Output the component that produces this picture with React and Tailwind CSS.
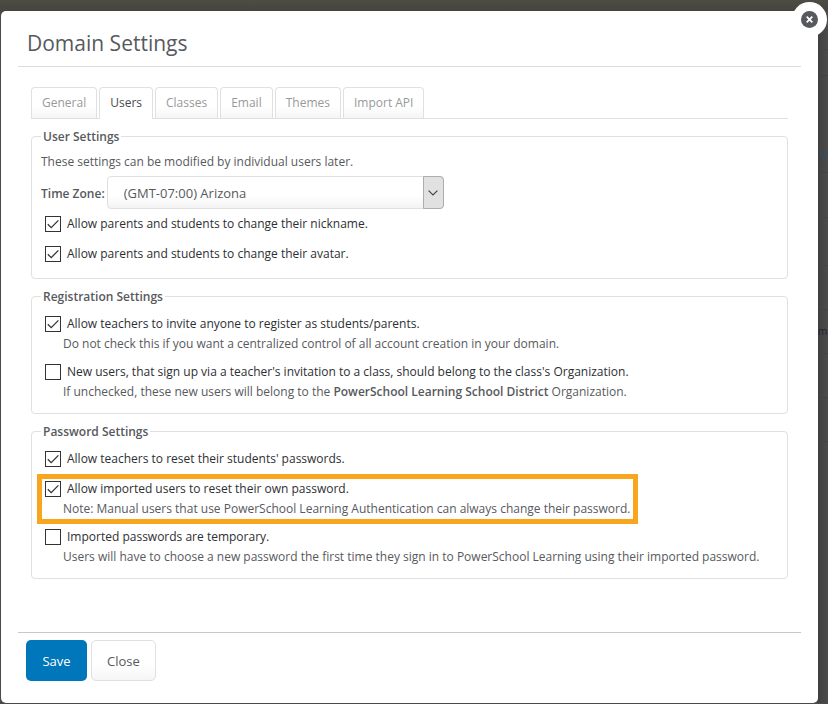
import { useState } from 'react';

const tabs = ['General', 'Users', 'Classes', 'Email', 'Themes', 'Import API'];

const Checkbox = ({ id, label, defaultChecked }) => (
  <div className="flex items-center gap-1.5 pl-1">
    <span className="grid size-4 shrink-0">
      <input
        id={id}
        type="checkbox"
        defaultChecked={defaultChecked}
        className="peer col-start-1 row-start-1 size-4 appearance-none border border-[#333] bg-white"
      />
      <svg
        viewBox="0 0 16 16"
        className="pointer-events-none invisible col-start-1 row-start-1 size-4 peer-checked:visible"
        fill="none"
        stroke="#333"
        strokeWidth="1.3"
        aria-hidden="true"
      >
        <path d="M2.8 8.2 6.2 11.6 13.4 4.4" />
      </svg>
    </span>
    <label htmlFor={id} className="leading-5 text-[#2d2f33]">
      {label}
    </label>
  </div>
);

const Hint = ({ children }) => <p className="pl-[22px] leading-5">{children}</p>;

const Group = ({ title, children }) => (
  <fieldset className="mt-[7px] min-w-0 rounded-[4px] border border-[#e0e0e0] px-[9px] pb-[11px]">
    <legend className="px-0.5 pt-0.5 leading-[18px] font-semibold">{title}</legend>
    {children}
  </fieldset>
);

// sliver of the page that stays visible beside the dialog
const PageBehind = () => (
  <div className="w-2.5 shrink-0 bg-linear-to-r from-[#404040] to-[#4c4c4c] text-[12px]" aria-hidden="true">
    <div className="h-[39px] border-b border-[#414141]" />
    <div className="h-[26px] border-b border-[#414141]" />
    <div className="flex h-[97px] items-end justify-end border-b border-[#414141] pb-2 text-[#2a4f66]">V</div>
    <div className="h-[45px] border-b border-[#414141]" />
    <div className="h-12 border-b border-[#414141]" />
    <div className="h-11 border-b border-[#414141]" />
    <div className="flex h-11 items-center border-b border-[#414141] text-[10px] text-[#1f2130]">m</div>
    <div className="h-11 border-b border-[#414141]" />
    <div className="h-11 border-b border-[#414141]" />
  </div>
);

const App = () => {
  const [active, setActive] = useState('Users');

  return (
    <div className="min-h-screen bg-[#4a4a4a] font-['Open_Sans','Liberation_Sans',sans-serif] text-[12px] text-[#57595d]">
      <div className="h-[11px] bg-linear-to-b from-[#4e4d43] to-[#45443e]" />
      <div className="flex pl-px">
        <main role="dialog" aria-labelledby="dialog-title" className="relative min-w-0 flex-1 rounded-[5px] bg-white px-[17px] pb-[22px]">
          <button
            type="button"
            aria-label="Close dialog"
            className="absolute -top-[9px] -right-[9px] flex size-[35px] items-center justify-center rounded-full bg-white"
          >
            <svg viewBox="0 0 17 17" className="size-[17px]" aria-hidden="true">
              <circle cx="8.5" cy="8.5" r="8.5" fill="#57595e" />
              <path d="M5.7 5.7 11.3 11.3M11.3 5.7 5.7 11.3" stroke="#fff" strokeWidth="1.8" />
            </svg>
          </button>

          <header className="border-b border-[#dcdcdc] pt-[17px] pb-2 pl-[9px]">
            <h1 id="dialog-title" className="text-[21px] leading-[30px]">Domain Settings</h1>
          </header>

          <div className="px-[13px] pt-5">
            <div role="tablist" className="flex gap-0.5 border-b border-[#e0e0e0]">
              {tabs.map((tab) => (
                <button
                  key={tab}
                  type="button"
                  role="tab"
                  aria-selected={tab === active}
                  onClick={() => setActive(tab)}
                  className={`rounded-t-[4px] border border-b-0 border-[#e0e0e0] px-2.5 leading-[30px] ${
                    tab === active
                      ? '-mb-px bg-white pb-px text-[#4a4c50]'
                      : 'bg-linear-to-b from-white from-60% to-[#f5f5f5] text-[#999]'
                  }`}
                >
                  {tab}
                </button>
              ))}
            </div>

            <Group title="User Settings">
              <p className="mt-1.5 leading-5">These settings can be modified by individual users later.</p>
              <div className="mt-1 mb-[5px] flex items-center gap-0.5">
                <label htmlFor="time-zone" className="pt-0.5 font-semibold">Time Zone:</label>
                <div className="grid w-[337px]">
                  <select
                    id="time-zone"
                    className="col-start-1 row-start-1 h-[33px] appearance-none rounded-[4px] border border-[#e0e0e0] bg-linear-to-b from-white from-60% to-[#f3f3f3] pt-0.5 pl-4 text-[13px]"
                  >
                    <option>(GMT-07:00) Arizona</option>
                  </select>
                  <span className="pointer-events-none col-start-1 row-start-1 flex w-[21px] items-center justify-center justify-self-end rounded-r-[4px] border border-[#adadad] bg-[#e1e1e1]">
                    <svg viewBox="0 0 10 6" className="h-1.5 w-2.5" fill="none" stroke="#444" strokeWidth="1.2" aria-hidden="true">
                      <path d="M.6.6 5 5 9.4.6" />
                    </svg>
                  </span>
                </div>
              </div>
              <div className="mb-[3px] space-y-2.5">
                <Checkbox id="nickname" defaultChecked label="Allow parents and students to change their nickname." />
                <Checkbox id="avatar" defaultChecked label="Allow parents and students to change their avatar." />
              </div>
            </Group>

            <Group title="Registration Settings">
              <div className="mt-2 space-y-2">
                <div>
                  <Checkbox id="invite" defaultChecked label="Allow teachers to invite anyone to register as students/parents." />
                  <Hint>Do not check this if you want a centralized control of all account creation in your domain.</Hint>
                </div>
                <div>
                  <Checkbox
                    id="organization"
                    label="New users, that sign up via a teacher's invitation to a class, should belong to the class's Organization."
                  />
                  <Hint>
                    If unchecked, these new users will belong to the{' '}
                    <strong className="font-semibold">PowerSchool Learning School District</strong> Organization.
                  </Hint>
                </div>
              </div>
            </Group>

            <Group title="Password Settings">
              <div className="mt-2 space-y-2">
                <div className="mb-2.5">
                  <Checkbox id="student-reset" defaultChecked label="Allow teachers to reset their students' passwords." />
                </div>
                <div className="relative w-fit">
                  <span className="pointer-events-none absolute -inset-y-[5px] -right-2 -left-1 border-5 border-[#f9a61f]" />
                  <Checkbox id="imported-reset" defaultChecked label="Allow imported users to reset their own password." />
                  <Hint>Note: Manual users that use PowerSchool Learning Authentication can always change their password.</Hint>
                </div>
                <div>
                  <Checkbox id="temporary" label="Imported passwords are temporary." />
                  <Hint>
                    Users will have to choose a new password the first time they sign in to PowerSchool Learning using their imported password.
                  </Hint>
                </div>
              </div>
            </Group>
          </div>

          <footer className="mt-[53px] flex gap-1 border-t border-[#c8c8c8] pt-[7px] pl-2 text-[13px]">
            <button type="button" className="h-[41px] min-w-[61px] rounded-[5px] bg-[#0076bb] px-4 pt-[3px] text-white">Save</button>
            <button
              type="button"
              className="h-[41px] rounded-[5px] border border-[#e0e0e0] bg-linear-to-b from-white from-60% to-[#f6f6f6] px-[15px] pt-[3px]"
            >
              Close
            </button>
          </footer>
        </main>
        <PageBehind />
      </div>
    </div>
  );
};

export default App;
